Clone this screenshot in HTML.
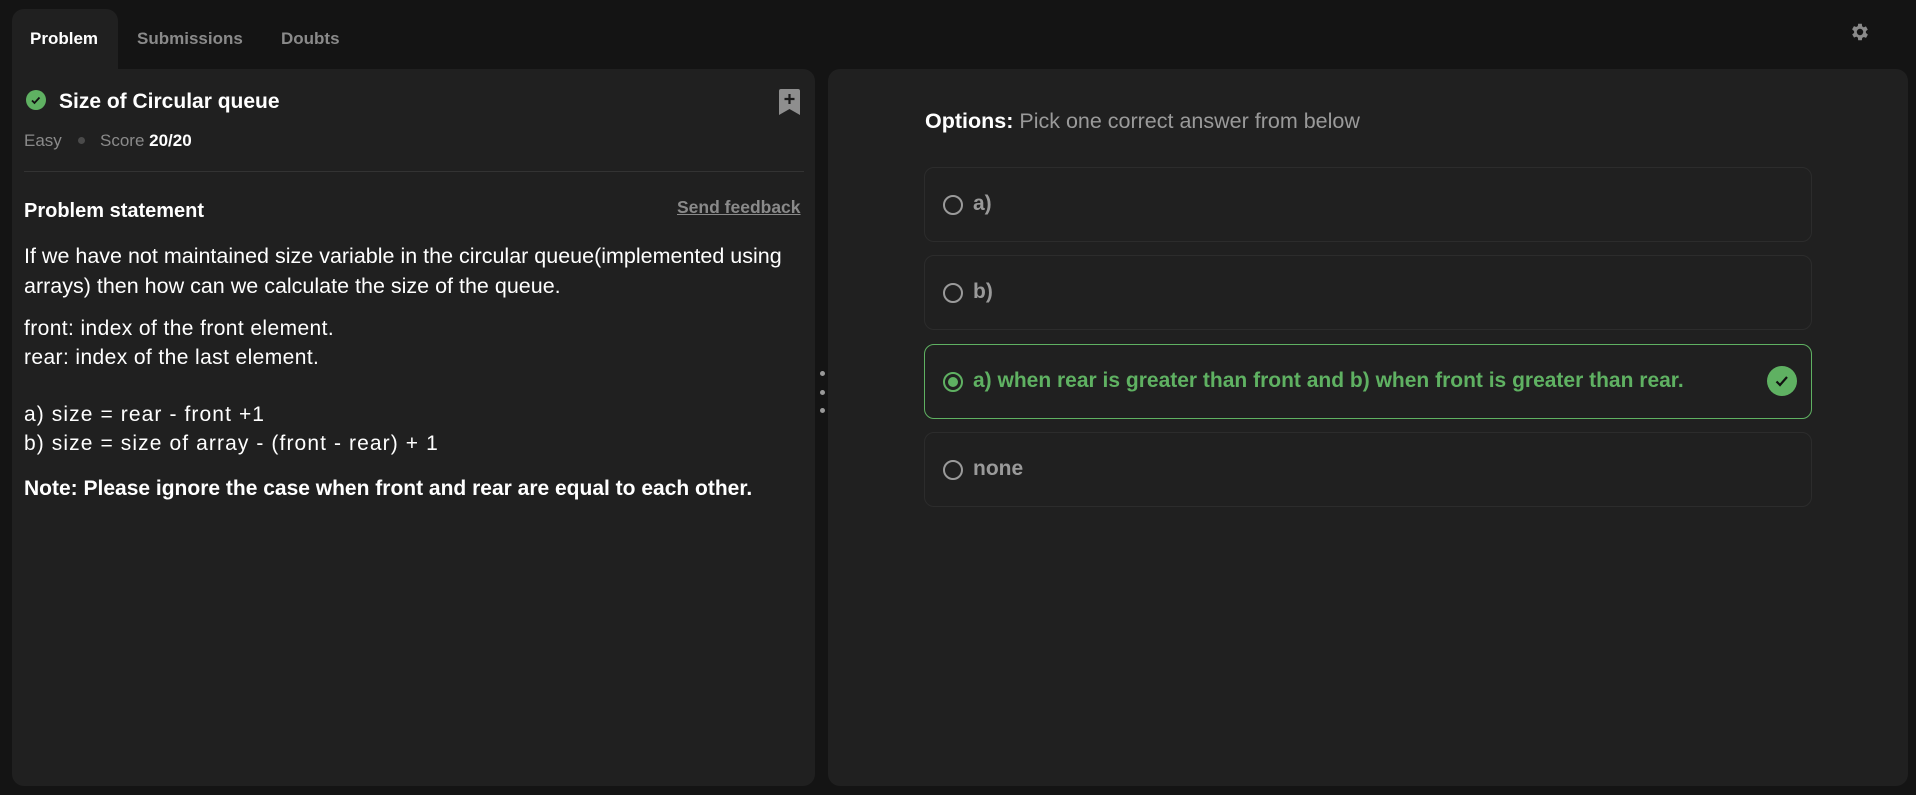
<!DOCTYPE html>
<html><head><meta charset="utf-8"><style>
*{box-sizing:border-box;margin:0;padding:0}
body{width:1916px;height:795px;background:#141414;font-family:"Liberation Sans",sans-serif;position:relative;overflow:hidden;color:#fff}
.tab{position:absolute;top:9px;height:60px;font-size:17px;font-weight:bold;color:#8a8a8a;line-height:60px}
.panel{position:absolute;top:69px;bottom:9px;background:#202020;border-radius:12px}
.t{position:absolute;white-space:nowrap}
.opt{position:absolute;left:924px;width:888px;height:75px;border:1px solid #2c2c2c;border-radius:10px}
.opt .r{position:absolute;left:18px;top:27px;width:20px;height:20px;border:2px solid #9a9a9a;border-radius:50%}
.opt .l{position:absolute;left:48px;top:24px;font-size:21px;font-weight:bold;color:#9a9a9a}
</style></head><body>
<div style="position:absolute;left:12px;top:9px;width:106px;height:70px;background:#202020;border-radius:12px 12px 0 0"></div>
<div class="tab" style="left:30px;color:#fff">Problem</div>
<div class="tab" style="left:137px">Submissions</div>
<div class="tab" style="left:281px">Doubts</div>
<svg style="position:absolute;left:1849px;top:21px" width="22" height="22" viewBox="0 0 24 24"><path fill="#8a8a8a" d="M19.4 13a7.7 7.7 0 0 0 0-2l2.1-1.6-2-3.5-2.5 1a7.4 7.4 0 0 0-1.7-1L15 3h-4l-.4 2.6a7.4 7.4 0 0 0-1.7 1l-2.5-1-2 3.5L6.6 11a7.7 7.7 0 0 0 0 2l-2.1 1.6 2 3.5 2.5-1a7.4 7.4 0 0 0 1.7 1L11 21h4l.4-2.6a7.4 7.4 0 0 0 1.7-1l2.5 1 2-3.5zM13 15.5a3.5 3.5 0 1 1 0-7 3.5 3.5 0 0 1 0 7z" transform="translate(-1 0)"/></svg>
<div class="panel" style="left:12px;width:803px;border-top-left-radius:0"></div>
<div class="panel" style="left:828px;width:1080px"></div>
<svg style="position:absolute;left:26px;top:90px" width="20" height="20" viewBox="0 0 20 20"><circle cx="10" cy="10" r="10" fill="#5fb162"/><path d="M6 10.5l2.5 2.5 5-5.5" stroke="#111" stroke-width="1.8" fill="none"/></svg>
<div class="t" style="left:59px;top:90px;font-size:21px;font-weight:bold">Size of Circular queue</div>
<svg style="position:absolute;left:779px;top:89px" width="21" height="26" viewBox="0 0 21 26"><path d="M2 0h17a2 2 0 0 1 2 2v24l-10.5-6L0 26V2a2 2 0 0 1 2-2z" fill="#8e8e8e"/><path d="M10.5 5v10M5.5 10h10" stroke="#1a1a1a" stroke-width="2.2"/></svg>
<div class="t" style="left:24px;top:131px;font-size:17px;color:#8a8a8a">Easy</div>
<div style="position:absolute;left:78px;top:137px;width:7px;height:7px;border-radius:50%;background:#4a4a4a"></div>
<div class="t" style="left:100px;top:131px;font-size:17px;color:#8a8a8a">Score <b style="color:#fff">20/20</b></div>
<div style="position:absolute;left:24px;top:171px;width:780px;height:1px;background:#333"></div>
<div class="t" style="left:24px;top:200px;font-size:20px;font-weight:bold">Problem statement</div>
<div class="t" style="left:677px;top:197px;font-size:17.5px;font-weight:bold;color:#8a8a8a;text-decoration:underline">Send feedback</div>
<div class="t" style="left:24px;top:241px;font-size:21.5px;line-height:30px;color:#fff">If we have not maintained size variable in the circular queue(implemented using<br>arrays) then how can we calculate the size of the queue.</div>
<div class="t" style="left:24px;top:314px;font-size:21px;line-height:29px;color:#fff;letter-spacing:0.4px">front: index of the front element.<br>rear: index of the last element.</div>
<div class="t" style="left:24px;top:400px;font-size:21px;line-height:29px;color:#fff;letter-spacing:1.1px">a) size = rear - front +1<br>b) size = size of array - (front - rear) + 1</div>
<div class="t" style="left:24px;top:477px;font-size:21px;font-weight:bold">Note: Please ignore the case when front and rear are equal to each other.</div>
<div style="position:absolute;left:820px;top:371px;width:5px;height:5px;border-radius:50%;background:#999"></div>
<div style="position:absolute;left:820px;top:390px;width:5px;height:5px;border-radius:50%;background:#999"></div>
<div style="position:absolute;left:820px;top:408px;width:5px;height:5px;border-radius:50%;background:#999"></div>
<div class="t" style="left:925px;top:109px;font-size:21.5px;color:#9a9a9a"><b style="color:#fff">Options:</b> Pick one correct answer from below</div>
<div class="opt" style="top:167px"><div class="r"></div><div class="l">a)</div></div>
<div class="opt" style="top:255px"><div class="r"></div><div class="l">b)</div></div>
<div class="opt" style="top:344px;border-color:#5fb162"><div class="r" style="border-color:#5fb162"><div style="position:absolute;left:3px;top:3px;width:10px;height:10px;border-radius:50%;background:#5fb162"></div></div><div class="l" style="color:#5fb162">a) when rear is greater than front and b) when front is greater than rear.</div>
<svg style="position:absolute;left:842px;top:21px" width="30" height="30" viewBox="0 0 30 30"><circle cx="15" cy="15" r="15" fill="#5fb162"/><path d="M9.5 15.5l3.5 3.5 7-8" stroke="#111" stroke-width="2.2" fill="none"/></svg></div>
<div class="opt" style="top:432px"><div class="r"></div><div class="l">none</div></div>
</body></html>
